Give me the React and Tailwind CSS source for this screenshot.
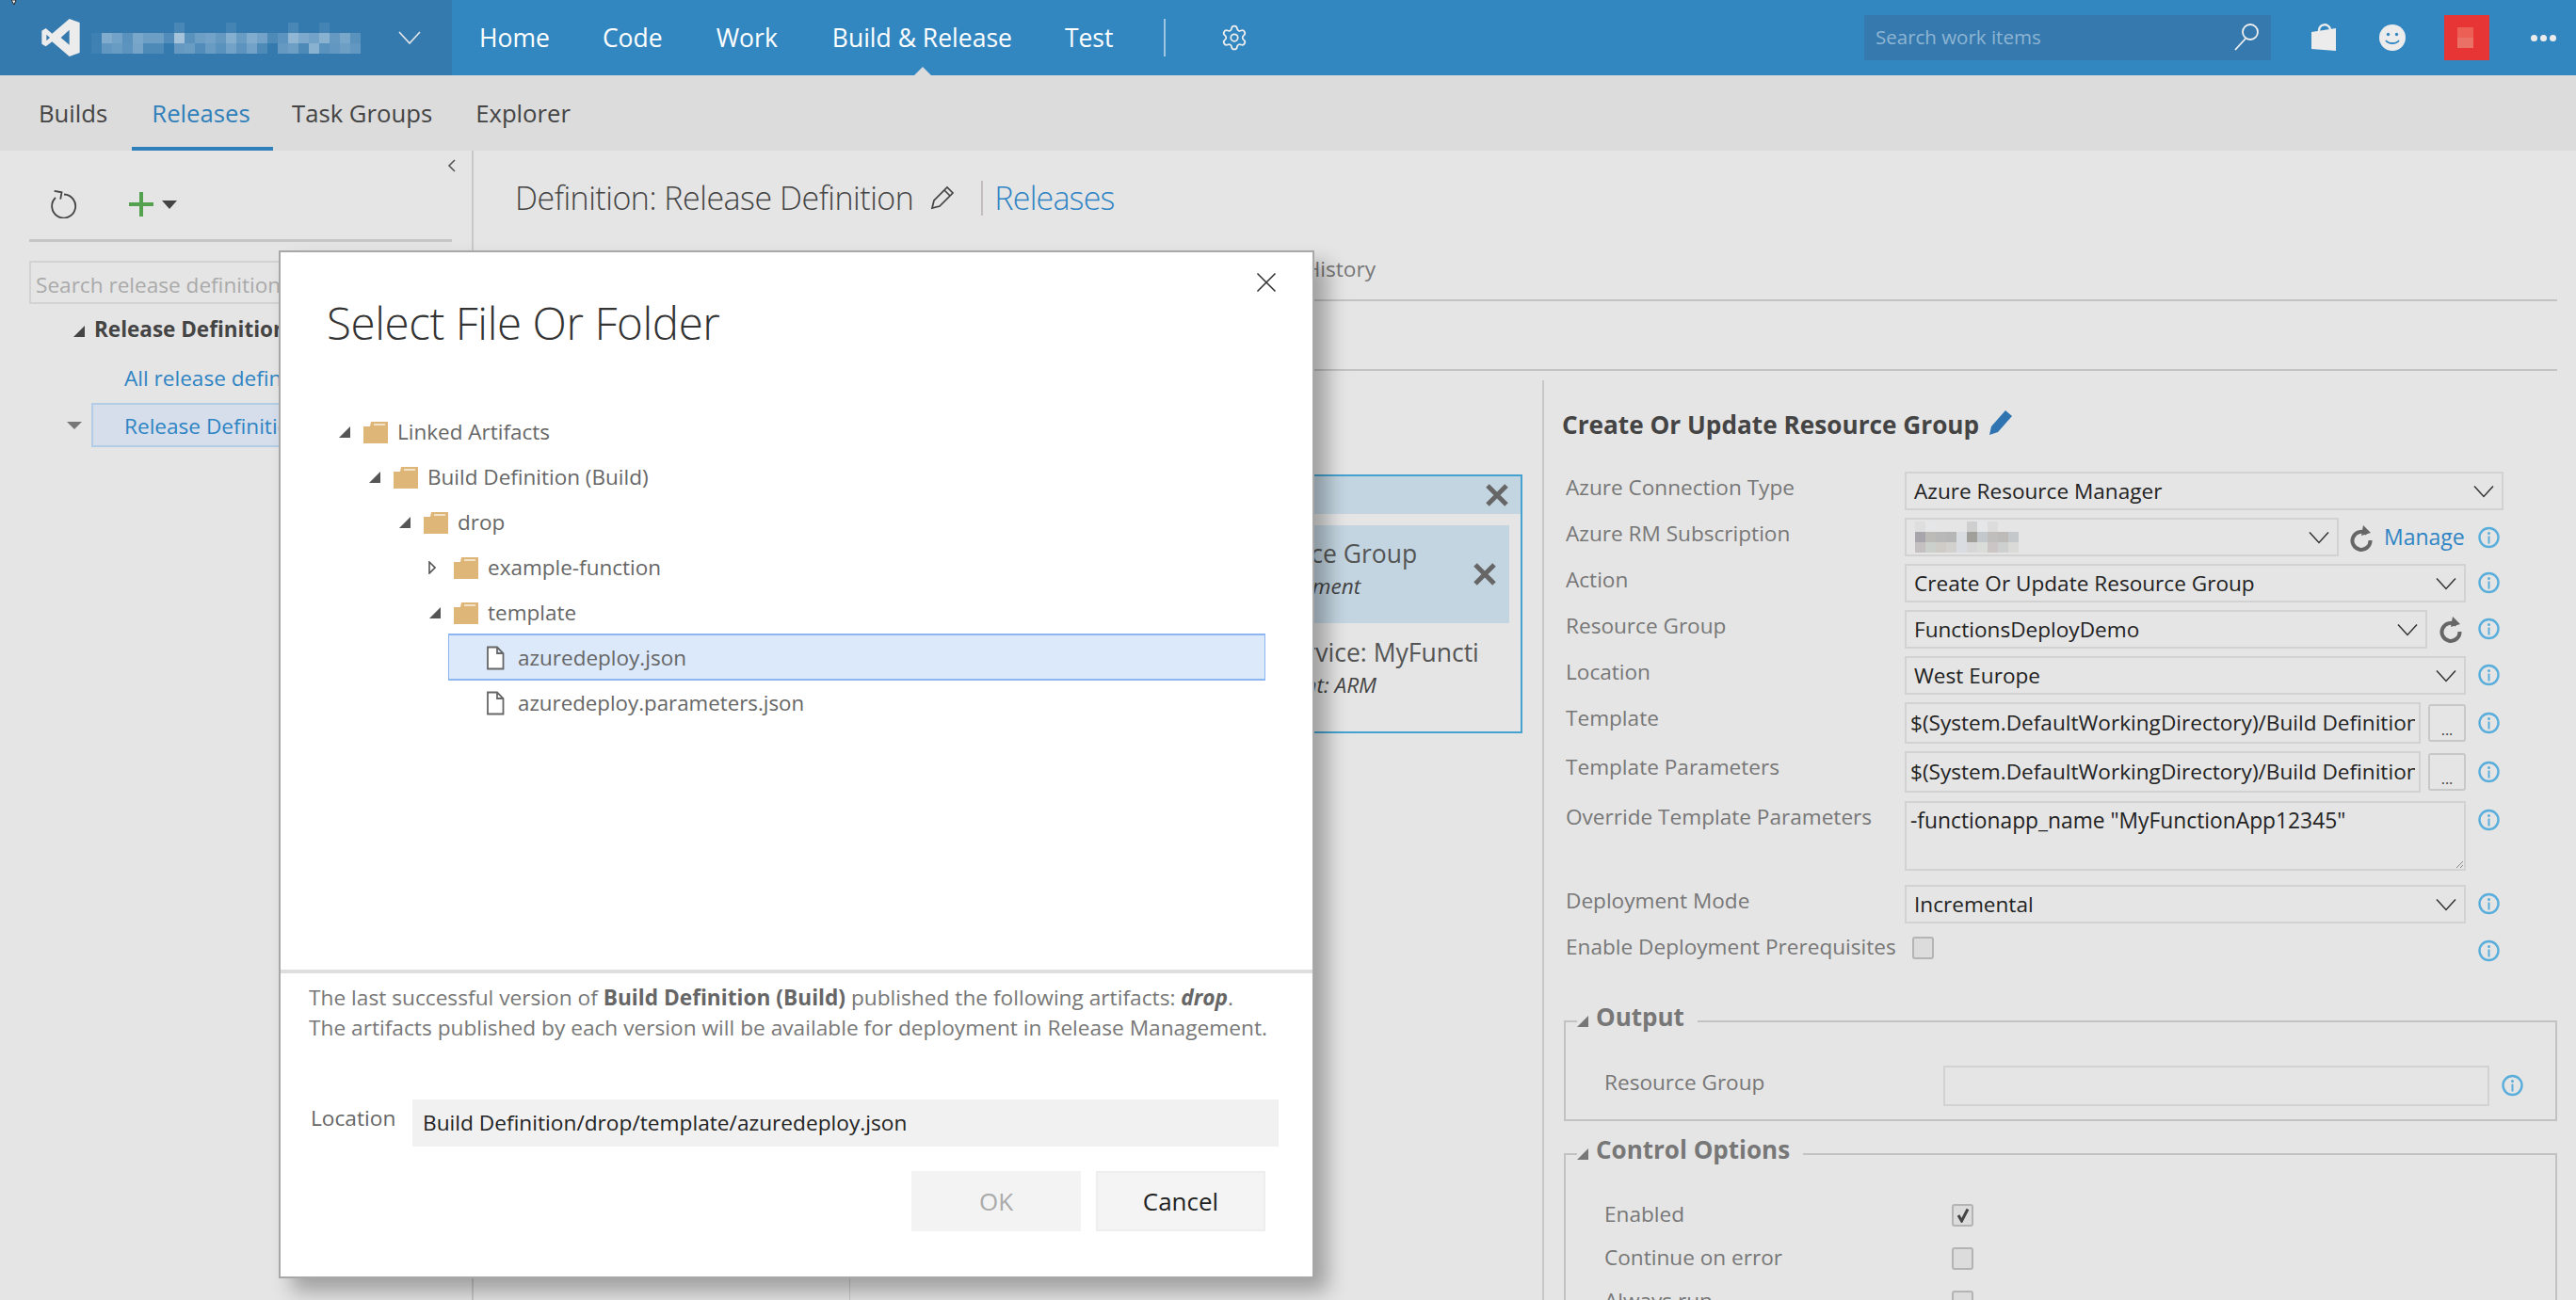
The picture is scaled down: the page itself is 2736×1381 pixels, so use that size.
import { Settings } from 'lucide-react'

// Mosaic cells standing in for the blurred names in the picture
const ORG_MOSAIC = [
  [0, 0, 0, 0, 0, 0, 0, 0, 0.1, 0, 0, 0, 0, 0.08, 0, 0, 0, 0, 0, 0.1, 0, 0, 0.08, 0, 0, 0],
  [0.05, 0.38, 0.3, 0.18, 0.34, 0.28, 0.28, 0.14, 0.55, 0.18, 0.28, 0.3, 0.24, 0.4, 0.26, 0.38, 0.3, 0.12, 0.2, 0.45, 0.36, 0.3, 0.42, 0.24, 0.34, 0.18],
  [0.06, 0.22, 0.26, 0.2, 0.32, 0.12, 0.12, 0, 0.24, 0.26, 0.14, 0.26, 0.18, 0.3, 0.2, 0.3, 0.12, 0, 0.24, 0.28, 0.12, 0.42, 0.18, 0.22, 0.28, 0.22],
]
const SUB_MOSAIC = [
  ['#dedede', '#e4e6e8', '#e5e5e5', '#e5e5e5', '#e5e5e5', '#cfcfcf', '#e4e6e8', '#dddcdc', '#e5e5e5', '#e5e5e5'],
  ['#a9a5ac', '#bdbbb8', '#b8b8b8', '#b6b6b6', '#d9dce0', '#a09f99', '#c3c8cc', '#c0bdbd', '#bdbbb8', '#c4c8cb'],
  ['#c4bfc1', '#ccd0cd', '#cfccc8', '#d3d1cd', '#d9dce0', '#d7d7d7', '#dadcda', '#cbc5c5', '#cdd0ce', '#dadbd9'],
]

function TriDown({ className = 'text-[#555]' }) {
  return (
    <svg width="12" height="12" viewBox="0 0 12 12" className={className}>
      <polygon points="12,0 12,12 0,12" fill="currentColor" />
    </svg>
  )
}

function TriRight() {
  return (
    <svg width="8" height="14" viewBox="0 0 8 14" className="ml-[-1px]">
      <polygon points="1,1 7,7 1,13" fill="#fff" stroke="#555" strokeWidth="1.6" />
    </svg>
  )
}

function Folder() {
  return (
    <svg width="26" height="23" viewBox="0 0 26 23" className="shrink-0">
      <path d="M0 5 L7 5 L8 0 L26 0 V23 H0 Z" fill="#deb677" />
      <rect x="11" y="2" width="12" height="2" fill="#f3e3ca" />
    </svg>
  )
}

function FileIcon() {
  return (
    <svg width="20" height="26" viewBox="0 0 20 26" fill="none" className="shrink-0">
      <path d="M2 1.5 H12 L18.5 8 V24.5 H2 Z M12 1.5 V8 H18.5" stroke="#666" strokeWidth="1.8" fill="#fff" />
    </svg>
  )
}

function Chevron({ className = '' }) {
  return (
    <svg width="22" height="14" viewBox="0 0 22 14" fill="none" className={className}>
      <path d="M1 1.5 L11 12.5 L21 1.5" stroke="#333" strokeWidth="1.5" />
    </svg>
  )
}

function InfoIcon({ className = '' }) {
  return (
    <svg width="23" height="24" viewBox="0 0 23 24" fill="none" className={`shrink-0 ${className}`}>
      <circle cx="11.5" cy="12" r="10" stroke="#5aaedb" strokeWidth="2.4" />
      <circle cx="11.5" cy="7.5" r="1.5" fill="#5aaedb" />
      <rect x="10.5" y="10.5" width="2" height="8" fill="#5aaedb" />
    </svg>
  )
}

function RefreshBold() {
  return (
    <svg width="26" height="30" viewBox="0 0 26 30" fill="none" className="shrink-0">
      <path d="M19 11 A9.5 9.5 0 1 0 22.5 18" stroke="#666" strokeWidth="4" />
      <polygon points="15,2 23,10 13,13" fill="#666" />
    </svg>
  )
}

function CrossBold({ className = '' }) {
  return (
    <svg width="26" height="26" viewBox="0 0 26 26" className={className}>
      <path d="M3 3 L23 23 M23 3 L3 23" stroke="#666" strokeWidth="5" />
    </svg>
  )
}

function Select({ value, width, children }) {
  return (
    <div className={`flex h-[41px] items-center justify-between border-2 border-[#d2d2d2] pl-[8px] pr-[8px] text-[22.6px] text-[#222] ${width}`}>
      <span>{value}</span>
      {children}
      <Chevron />
    </div>
  )
}

function Label({ children }) {
  return <div className="w-[360px] shrink-0 text-[22.6px] leading-[34px] text-[#777]">{children}</div>
}

function PathField({ label, mt }) {
  return (
    <div className={`flex ${mt}`}>
      <Label>{label}</Label>
      <div className="flex w-[636px] items-center">
        <div className="flex h-[44px] w-[548px] items-center border-2 border-[#d2d2d2] pl-[4px] pr-[4px] text-[22.6px] text-[#222]">
          <div className="overflow-hidden whitespace-nowrap">$(System.DefaultWorkingDirectory)/Build Definition/drop/template/azuredeploy.json</div>
        </div>
        <div className="ml-[8px] flex h-[40px] w-[40px] items-end justify-center rounded-[3px] border-2 border-[#c8c8c8] pb-[3px] text-[16px] leading-[16px] text-[#444]">...</div>
        <InfoIcon className="ml-[13px]" />
      </div>
    </div>
  )
}

function TreeRow({ level, open, label }) {
  return (
    <div className="flex h-[48px] items-center text-[22.5px] text-[#666]" style={{ paddingLeft: 62 + level * 32 }}>
      <div className="flex w-[26px] shrink-0">{open ? <TriDown className="text-[#555]" /> : <TriRight />}</div>
      <Folder />
      <span className="ml-[10px]">{label}</span>
    </div>
  )
}

function Fieldset({ title, className = '', children }) {
  return (
    <fieldset className={`border-2 border-[#c2c2c2] ${className}`}>
      <legend className="ml-[12px] flex h-[40px] items-center pb-[9px] pr-[14px] text-[26px] font-bold text-[#777]">
        <TriDown className="mr-[8px] mt-[8px] text-[#777]" />
        {title}
      </legend>
      {children}
    </fieldset>
  )
}

function Check({ checked, className = '' }) {
  return (
    <div className={`flex h-[24px] w-[23px] shrink-0 items-center justify-center rounded-[3px] border-2 border-[#b4b4b4] bg-[#dcdcdc] ${className}`}>
      {checked && (
        <svg width="14" height="16" viewBox="0 0 14 16">
          <path d="M2 8 L5.5 14 L12 1.5" stroke="#444" strokeWidth="3" fill="none" />
        </svg>
      )}
    </div>
  )
}

export default function App() {
  return (
    <div className="relative h-[1381px] w-[2736px] overflow-hidden bg-[#e5e5e5] font-['Open_Sans',sans-serif] text-[#444]">
      {/* Mouse pointer tip caught by the capture */}
      <svg width="6" height="6" viewBox="0 0 6 6" className="absolute left-[12px] top-0 z-10">
        <path d="M0 0 H5 L3 5 Z" fill="#fff" stroke="#222" strokeWidth="1" />
      </svg>

      {/* Top bar */}
      <header className="flex h-[80px] items-center bg-[#3387c1] text-white">
        <div className="flex h-full w-[480px] shrink-0 items-center bg-[#357aaf] pl-[44px]">
          <svg width="41" height="40" viewBox="42 30 121 120" className="shrink-0">
            <path
              fillRule="evenodd"
              fill="#ececec"
              d="M130 30 L163 42 V138 L130 150 L75 103 L55 118 L42 110 V68 L55 60 L75 77 Z M130 65 L103 90 L130 113 Z M57 80 V100 L68 90 Z"
            />
          </svg>
          <div className="ml-[12px] flex flex-col">
            {ORG_MOSAIC.map((row, r) => (
              <div key={r} className="flex">
                {row.map((a, c) => (
                  <div key={c} className="h-[11px] w-[11px] bg-white" style={{ opacity: a }} />
                ))}
              </div>
            ))}
          </div>
          <svg width="24" height="14" viewBox="0 0 24 14" fill="none" className="ml-[40px]">
            <path d="M1 1 L12 13 L23 1" stroke="#e8e8e8" strokeWidth="1.6" />
          </svg>
        </div>
        <nav className="ml-[29px] flex items-center pt-[2px] text-[26.5px]">
          <span>Home</span>
          <span className="ml-[56px]">Code</span>
          <span className="ml-[57px]">Work</span>
          <span className="relative ml-[58px]">
            Build &amp; Release
            <svg width="24" height="12" viewBox="0 0 24 12" className="absolute bottom-[-22px] left-[84px]">
              <polygon points="12,0 24,12 0,12" fill="#dcdcdc" />
            </svg>
          </span>
          <span className="ml-[56px]">Test</span>
          <span className="-mt-[2px] ml-[54px] h-[40px] w-[2px] bg-[#9fc6e0]" />
          <Settings size={30} strokeWidth={1.4} className="-mt-[2px] ml-[58px] text-[#eee]" />
        </nav>
        <div className="ml-auto flex h-[48px] items-center">
          <div className="flex h-full w-[432px] items-center justify-between bg-[#3679ae] pb-[2px] pl-[12px] pr-[12px] text-[20.5px] text-[#8db5d3]">
            <span>Search work items</span>
            <svg width="28" height="30" viewBox="0 0 28 30" fill="none">
              <circle cx="18" cy="10" r="8" stroke="#f0f0f0" strokeWidth="1.8" />
              <path d="M13 17 L2 29" stroke="#f0f0f0" strokeWidth="1.8" />
            </svg>
          </div>
          <svg width="28" height="30" viewBox="0 0 28 30" className="ml-[42px]">
            <path d="M1 9 L27 5 V29 L1 27 Z" fill="#ececec" />
            <path d="M9 8 C9 0 19 -1 21 6" stroke="#ececec" strokeWidth="2.4" fill="none" />
          </svg>
          <svg width="28" height="28" viewBox="0 0 28 28" className="ml-[45px]">
            <circle cx="14" cy="14" r="14" fill="#ececec" />
            <circle cx="9.5" cy="10.5" r="1.7" fill="#3387c1" />
            <circle cx="18.5" cy="10.5" r="1.7" fill="#3387c1" />
            <path d="M7 17 C10 21 18 21 21 17" stroke="#3387c1" strokeWidth="1.8" fill="none" />
          </svg>
          <div className="ml-[41px] flex h-full w-[48px] items-center bg-[#e73535] pl-[14px]">
            <div className="flex h-[22px] w-[17px] flex-col">
              <div className="flex-1 bg-[#ec5f55]" />
              <div className="flex-1 bg-[#ea7166]" />
            </div>
          </div>
          <div className="ml-[44px] mr-[21px] flex gap-[3px]">
            <span className="h-[7px] w-[7px] rounded-full bg-[#ececec]" />
            <span className="h-[7px] w-[7px] rounded-full bg-[#ececec]" />
            <span className="h-[7px] w-[7px] rounded-full bg-[#ececec]" />
          </div>
        </div>
      </header>

      {/* Hub tabs */}
      <div className="flex h-[80px] bg-[#dcdcdc] pl-[26px] text-[25.7px]">
        <div className="flex h-full w-[114px] items-center pl-[15px] pt-[2px]">Builds</div>
        <div className="flex h-full w-[150px] items-center justify-center border-b-4 border-[#2f80ba] pr-[3px] pt-[6px] text-[#2f80ba]">Releases</div>
        <div className="ml-[20px] flex h-full items-center pt-[2px]">Task Groups</div>
        <div className="ml-[46px] flex h-full items-center pt-[2px]">Explorer</div>
      </div>

      <div className="flex h-[1221px]">
        {/* Definitions sidebar */}
        <aside className="w-[503px] shrink-0 border-r-2 border-[#c8c8c8]">
          <div className="flex h-[32px] justify-end pr-[16px] pt-[8px]">
            <svg width="10" height="16" viewBox="0 0 10 16" fill="none">
              <path d="M8 2 L2 8 L8 14" stroke="#555" strokeWidth="1.6" />
            </svg>
          </div>
          <div className="ml-[31px] flex h-[65px] w-[449px] items-start border-b-[3px] border-[#c6c6c6] pl-[23px] pt-[10px]">
            <svg width="28" height="30" viewBox="0 0 28 30" fill="none">
              <path d="M5 8 A12.5 12.5 0 1 0 14 4.5" stroke="#444" strokeWidth="1.8" />
              <path d="M3 1.5 H11 V9" stroke="#444" strokeWidth="1.8" transform="rotate(10 7 5)" />
            </svg>
            <svg width="26" height="26" viewBox="0 0 26 26" className="ml-[55px] mt-[2px]">
              <rect x="11" y="0" width="4" height="26" fill="#54a14f" />
              <rect x="0" y="11" width="26" height="4" fill="#54a14f" />
            </svg>
            <svg width="16" height="9" viewBox="0 0 16 9" className="ml-[9px] mt-[11px]">
              <polygon points="0,0 16,0 8,9" fill="#444" />
            </svg>
          </div>
          <div className="ml-[31px] mt-[20px] flex h-[46px] w-[449px] items-center border-2 border-[#d2d2d2] pl-[5px] pt-[5px] text-[22.6px] text-[#aaa]">
            Search release definitions
          </div>
          <div className="mt-[9px] flex h-[38px] items-center pb-[3px] pl-[78px] text-[22.5px] font-bold">
            <TriDown className="mt-[4px] text-[#444]" />
            <span className="ml-[10px]">Release Definitions</span>
          </div>
          <div className="mt-[13px] flex h-[38px] items-center pl-[132px] text-[22.6px] text-[#2f84c4]">All release definitions</div>
          <div className="mt-[7px] flex items-center pl-[71px]">
            <svg width="16" height="8" viewBox="0 0 16 8" className="mr-[10px]">
              <polygon points="0,0 16,0 8,8" fill="#777" />
            </svg>
            <div className="flex h-[47px] w-[383px] items-center border-2 border-[#b4cde6] bg-[#d5deea] pl-[33px] pt-[3px] text-[22.6px] text-[#2f84c4]">
              Release Definition
            </div>
          </div>
        </aside>

        <main className="min-w-0 flex-1">
          <div className="flex h-[100px] items-center pl-[44px]">
            <span className="text-[34px] font-light tracking-[-0.5px] text-[#444]">Definition: Release Definition</span>
            <svg width="28" height="28" viewBox="0 0 28 28" fill="none" className="ml-[17px]">
              <path d="M3 25 L5 17 L19 3 L25 9 L11 23 Z M16 6 L22 12" stroke="#444" strokeWidth="1.7" />
            </svg>
            <span className="ml-[27px] h-[37px] w-[2px] bg-[#c4bdbd]" />
            <span className="ml-[12px] text-[34px] font-light tracking-[-0.8px] text-[#2f84c4]">Releases</span>
          </div>

          <div className="mr-[20px] flex h-[60px] items-center justify-end border-b-2 border-[#c2c2c2] pb-[6px] pr-[1255px] text-[22.6px] text-[#777]">
            <span>Environments</span>
            <span className="ml-[30px]">Artifacts</span>
            <span className="ml-[30px]">Variables</span>
            <span className="ml-[30px]">Triggers</span>
            <span className="ml-[30px]">General</span>
            <span className="ml-[30px]">Retention</span>
            <span className="ml-[30px]">History</span>
          </div>
          <div className="mr-[20px] h-[74px] border-b-2 border-[#c2c2c2]" />

          <div className="flex h-[987px]">
            {/* Environment list, mostly under the dialog */}
            <div className="h-full w-[400px] shrink-0 border-r border-[#c8c8c8]" />

            {/* Environment card */}
            <div className="flex min-w-0 flex-1 justify-end pr-[21px] pt-[110px]">
              <div className="h-[275px] w-[567px] border-2 border-[#45a2d0]">
                <div className="flex h-[40px] items-center justify-end bg-[#c3d5e1] pr-[12px]">
                  <CrossBold />
                </div>
                <div className="ml-[12px] mr-[12px] mt-[12px] flex h-[104px] items-center justify-between bg-[#c3d5e1] pl-[17px] pr-[13px]">
                  <div className="whitespace-nowrap pb-[10px]">
                    <div className="text-[26.5px] leading-[36px] text-[#555]">Create Or Update Resource Group</div>
                    <div className="pl-[18px] text-[22.6px] italic leading-[34px] text-[#444]">Azure Resource Group Deployment</div>
                  </div>
                  <CrossBold />
                </div>
                <div className="mt-[13px] w-[520px] overflow-hidden whitespace-nowrap">
                  <div className="pl-[171px] text-[26.5px] leading-[36px] text-[#555]">Azure App Service: MyFunctionApp12345</div>
                  <div className="flex justify-end pr-[110px] text-[22.6px] italic leading-[34px] text-[#444]">AzureRM Deployment: ARM</div>
                </div>
              </div>
            </div>

            {/* Task settings */}
            <section className="mt-[10px] w-[1098px] shrink-0 border-l-2 border-[#c8c8c8] pl-[19px] pr-[20px]">
              <div className="flex h-[76px] items-center pt-[20px]">
                <h2 className="text-[26.2px] font-bold text-[#444]">Create Or Update Resource Group</h2>
                <svg width="26" height="30" viewBox="0 0 26 30" className="mb-[6px] ml-[10px]">
                  <path d="M1 28 L3 19 L18 2 L25 8 L10 25 Z" fill="#2f74b0" />
                </svg>
              </div>
              <div className="mt-[21px] pl-[4px]">
                <div className="flex">
                  <Label>Azure Connection Type</Label>
                  <Select value="Azure Resource Manager" width="w-[636px]" />
                </div>
                <div className="mt-[8px] flex">
                  <Label>Azure RM Subscription</Label>
                  <div className="flex w-[636px] items-center">
                    <div className="flex h-[41px] w-[461px] items-center justify-between border-2 border-[#d2d2d2] pl-[9px] pr-[8px]">
                      <div className="flex flex-col">
                        {SUB_MOSAIC.map((row, r) => (
                          <div key={r} className="flex">
                            {row.map((c, i) => (
                              <div key={i} className="h-[11px] w-[11px]" style={{ backgroundColor: c }} />
                            ))}
                          </div>
                        ))}
                      </div>
                      <Chevron />
                    </div>
                    <div className="ml-[11px]"><RefreshBold /></div>
                    <span className="ml-[11px] text-[23px] text-[#2f84c4]">Manage</span>
                    <InfoIcon className="ml-auto mr-[4px]" />
                  </div>
                </div>
                <div className="mt-[8px] flex">
                  <Label>Action</Label>
                  <Select value="Create Or Update Resource Group" width="w-[596px]" />
                  <InfoIcon className="ml-[13px] mt-[8px]" />
                </div>
                <div className="mt-[8px] flex">
                  <Label>Resource Group</Label>
                  <Select value="FunctionsDeployDemo" width="w-[555px]" />
                  <div className="ml-[12px] mt-[5px]"><RefreshBold /></div>
                  <InfoIcon className="ml-[16px] mt-[8px]" />
                </div>
                <div className="mt-[8px] flex">
                  <Label>Location</Label>
                  <Select value="West Europe" width="w-[596px]" />
                  <InfoIcon className="ml-[13px] mt-[8px]" />
                </div>
                <PathField label="Template" mt="mt-[8px]" />
                <PathField label="Template Parameters" mt="mt-[8px]" />
                <div className="mt-[9px] flex">
                  <Label>Override Template Parameters</Label>
                  <div className="relative h-[74px] w-[596px] border-2 border-[#d2d2d2] pl-[4px] pt-[3px] text-[22.8px] leading-[32px] text-[#222]">
                    -functionapp_name "MyFunctionApp12345"
                    <svg width="10" height="10" viewBox="0 0 10 10" className="absolute bottom-0 right-0">
                      <path d="M9 2 L2 9 M9 6 L6 9" stroke="#888" strokeWidth="1" />
                    </svg>
                  </div>
                  <InfoIcon className="ml-[13px] mt-[8px]" />
                </div>
                <div className="mt-[15px] flex">
                  <Label>Deployment Mode</Label>
                  <Select value="Incremental" width="w-[596px]" />
                  <InfoIcon className="ml-[13px] mt-[8px]" />
                </div>
                <div className="mt-[14px] flex h-[36px] items-start">
                  <div className="w-[368px] shrink-0 whitespace-nowrap text-[22.6px] leading-[22px] text-[#777]">Enable Deployment Prerequisites</div>
                  <Check />
                  <InfoIcon className="ml-[578px] mt-[3px]" />
                </div>
              </div>

              <Fieldset title="Output" className="ml-[2px] mt-[34px]">
                <div className="flex pb-[14px] pl-[41px] pt-[27px]">
                  <div className="w-[360px] shrink-0 text-[22.6px] leading-[36px] text-[#777]">Resource Group</div>
                  <div className="h-[43px] w-[580px] border-2 border-[#d2d2d2]" />
                  <InfoIcon className="ml-[13px] mt-[9px]" />
                </div>
              </Fieldset>

              <Fieldset title="Control Options" className="ml-[2px] mt-[15px]">
                <div className="pl-[41px] pt-[33px]">
                  {[
                    ['Enabled', true],
                    ['Continue on error', false],
                    ['Always run', false],
                  ].map(([label, checked]) => (
                    <div key={label} className="mb-[22px] flex h-[24px] items-center">
                      <div className="w-[369px] shrink-0 pb-[3px] text-[22.6px] text-[#777]">{label}</div>
                      <Check checked={checked} />
                    </div>
                  ))}
                </div>
              </Fieldset>
            </section>
          </div>
        </main>
      </div>

      {/* Modal dialog */}
      <div className="absolute left-[296px] top-[266px] z-20 flex h-[1092px] w-[1100px] flex-col border-2 border-[#a8a8a8] bg-white shadow-[14px_14px_20px_rgba(0,0,0,0.3)]">
        <div className="flex h-[167px] shrink-0 items-start justify-between">
          <h1 className="ml-[49px] mt-[40px] text-[47.5px] font-light leading-[70px] tracking-[-0.4px] text-[#333]">Select File Or Folder</h1>
          <svg width="22" height="22" viewBox="0 0 22 22" fill="none" className="mr-[38px] mt-[21px]">
            <path d="M1.5 1.5 L20.5 20.5 M20.5 1.5 L1.5 20.5" stroke="#333" strokeWidth="1.6" />
          </svg>
        </div>
        <div className="h-[595px] shrink-0">
          <TreeRow level={0} open label="Linked Artifacts" />
          <TreeRow level={1} open label="Build Definition (Build)" />
          <TreeRow level={2} open label="drop" />
          <TreeRow level={3} open={false} label="example-function" />
          <TreeRow level={3} open label="template" />
          <div className="-mt-[2px] ml-[178px] flex h-[50px] w-[868px] items-center border-x border-y-2 border-[#8db5f0] bg-[#dbe9fa] pl-[39px] pt-[2px] text-[22.5px] text-[#666]">
            <FileIcon />
            <span className="ml-[14px]">azuredeploy.json</span>
          </div>
          <div className="ml-[179px] flex h-[48px] items-center pl-[39px] text-[22.3px] text-[#666]">
            <FileIcon />
            <span className="ml-[14px]">azuredeploy.parameters.json</span>
          </div>
        </div>
        <div className="h-[4px] shrink-0 bg-[#dedede]" />
        <div className="pl-[30px] pt-[10px] text-[22.7px] leading-[32px] text-[#777]">
          <div>
            The last successful version of <b className="text-[#666]">Build Definition (Build)</b> published the following artifacts: <b className="italic text-[#666]">drop</b>.
          </div>
          <div>The artifacts published by each version will be available for deployment in Release Management.</div>
        </div>
        <div className="mt-[60px] flex items-start pl-[32px]">
          <div className="w-[108px] pt-[2px] text-[22.7px] leading-[36px] text-[#666]">Location</div>
          <div className="flex h-[50px] w-[920px] items-center bg-[#f1f1f1] pl-[11px] text-[22.7px] text-[#222]">Build Definition/drop/template/azuredeploy.json</div>
        </div>
        <div className="mt-[26px] flex justify-end pr-[50px]">
          <div className="flex h-[64px] w-[180px] items-center justify-center bg-[#f3f3f3] text-[26px] text-[#aaa]">OK</div>
          <div className="ml-[16px] flex h-[64px] w-[180px] items-center justify-center border-2 border-[#eeeeee] bg-[#f4f4f4] text-[26px] text-[#222]">Cancel</div>
        </div>
      </div>
    </div>
  )
}
